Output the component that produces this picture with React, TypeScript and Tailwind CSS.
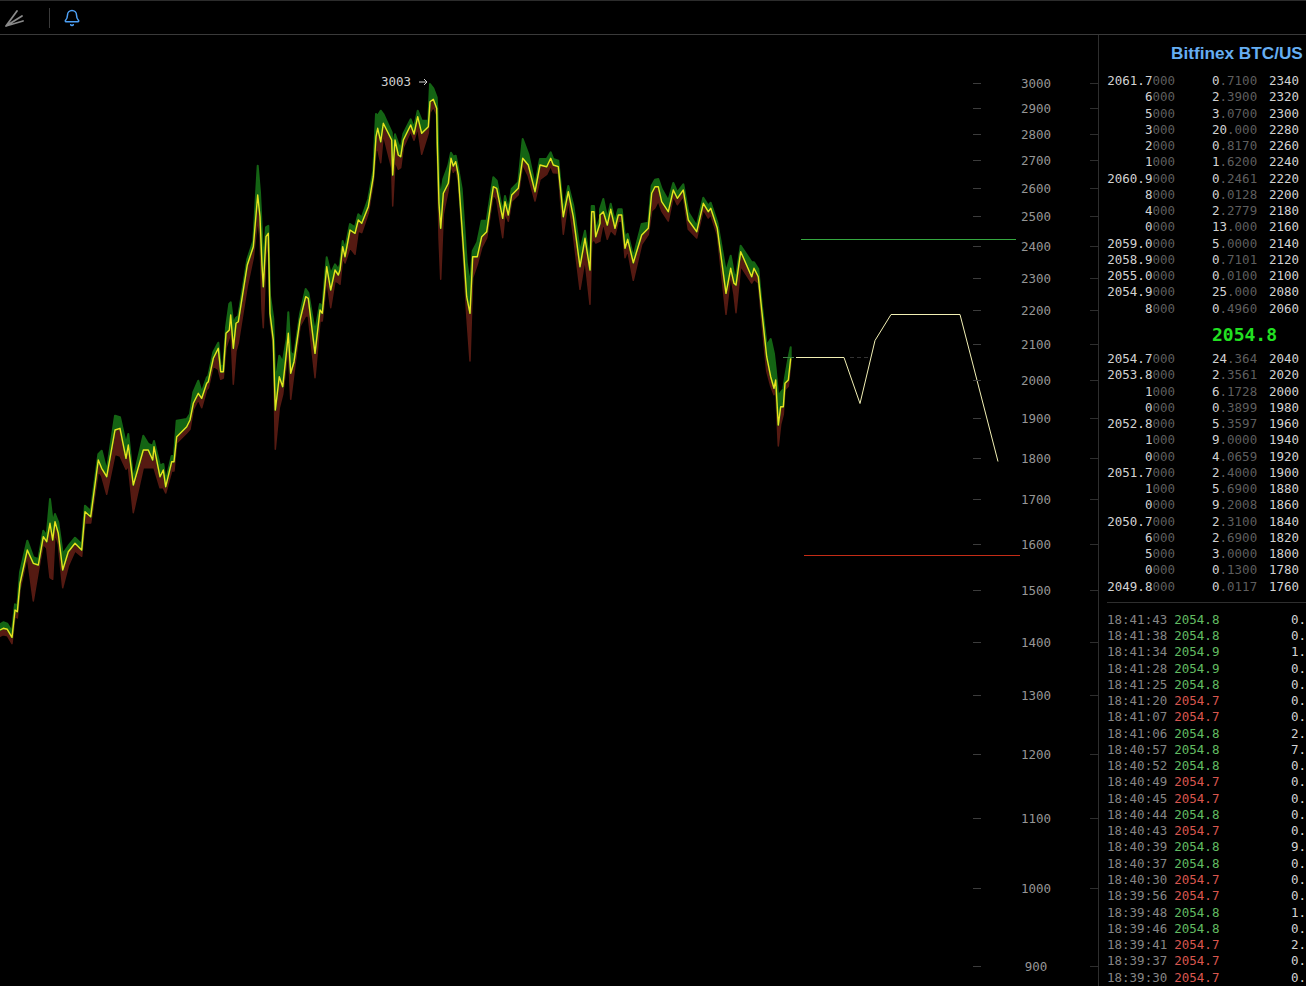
import { Bell } from "lucide-react";

const MONO = "font-['DejaVu_Sans_Mono','Liberation_Mono',monospace]";

// [x, y, up, down] traced from the chart, each segment in its own 3x crop coordinates
type Pt = [number, number, number?, number?];
type Segment = { ox: number; oy: number; points: Pt[] };

const SEGMENTS: Segment[] = [
  {
    ox: 0,
    oy: 400,
    points: [
      [0, 690, 8, 6], [10, 685, 15, 8], [22, 688, 8, 8], [36, 712, 4, 6], [45, 630, 8, 6], [52, 635, 5, 8],
      [60, 550, 30, 5], [82, 450, 25, 10], [100, 490, 15, 110], [115, 495, 8, 15], [130, 410, 15, 20],
      [140, 425, 15, 15], [150, 370, 70, 160], [158, 420, 50, 115], [165, 365, 20, 30], [175, 400, 30, 30],
      [188, 510, 45, 50], [205, 455, 10, 40], [225, 430, 10, 20], [245, 450, 5, 12], [255, 335, 15, 30],
      [272, 350, 8, 8], [295, 180, 5, 30], [305, 205, 50, 20], [320, 230, 10, 50], [345, 90, 40, 70],
      [360, 85, 30, 80], [378, 175, 40, 30], [385, 135, 30, 60], [400, 255, 10, 80], [430, 150, 40, 50],
      [445, 150, 15, 50], [458, 180, 40, 20], [462, 140, 5, 60], [480, 230, 30, 30], [490, 210, 15, 50],
      [497, 260, 10, 8], [515, 185, 8, 25], [522, 185, 8, 25], [530, 110, 45, 10], [560, 80, 20, 10],
    ],
  },
  {
    ox: 190,
    oy: 150,
    points: [
      [0, 810, 15, 25], [10, 760, 30, 8], [25, 730, 35, 15], [35, 745, 15, 25], [50, 700, 8, 10],
      [55, 695, 12, 12], [70, 625, 15, 20], [85, 595, 10, 60], [92, 665, 10, 20], [100, 665, 5, 15],
      [108, 550, 10, 40], [118, 540, 75, 20], [122, 495, 35, 25], [130, 595, 70, 105], [138, 520, 5, 80],
      [145, 515, 5, 60], [172, 345, 5, 60], [190, 290, 5, 30], [203, 135, 85, 70], [210, 200, 70, 60],
      [216, 345, 90, 130], [220, 410, 60, 120], [228, 260, 25, 50], [235, 250, 20, 30], [240, 490, 50, 5],
      [250, 570, 60, 10], [256, 780, 75, 115], [268, 680, 60, 90], [278, 710, 70, 20], [290, 600, 30, 30],
      [295, 550, 60, 40], [302, 670, 60, 75], [312, 635, 10, 30], [330, 510, 8, 10], [347, 440, 20, 55],
      [355, 445, 10, 50], [375, 610, 60, 70], [390, 480, 15, 30], [397, 490, 5, 20], [410, 350, 25, 35],
      [422, 420, 45, 50], [435, 360, 10, 30], [445, 375, 10, 20],
    ],
  },
  {
    ox: 340,
    oy: 60,
    points: [
      [0, 630, 10, 40], [8, 560, 12, 30], [15, 590, 20, 15], [30, 510, 15, 50], [45, 520, 15, 60],
      [55, 480, 10, 30], [65, 490, 10, 25], [85, 440, 20, 8], [100, 350, 5, 8], [108, 230, 65, 40],
      [113, 205, 35, 60], [122, 245, 90, 60], [130, 190, 25, 30], [155, 240, 20, 80], [158, 345, 80, 90],
      [165, 240, 5, 60], [175, 285, 30, 40], [182, 290, 20, 30], [190, 240, 15, 20], [212, 195, 10, 10],
      [222, 222, 15, 5], [233, 170, 15, 30], [245, 220, 35, 60], [265, 200, 15, 10], [270, 125, 50, 30],
      [280, 118, 30, 20], [290, 145, 30, 5], [292, 250, 100, 5], [297, 430, 60, 100], [302, 505, 90, 150],
      [310, 400, 40, 60], [325, 370, 50, 8], [333, 295, 10, 8], [340, 318, 25, 8], [347, 305, 15, 8],
      [355, 345, 10, 8], [365, 490, 100, 5], [380, 710, 100, 50], [390, 760, 80, 140], [398, 590, 10, 60],
      [412, 590, 40, 20], [425, 530, 45, 30], [440, 515, 30, 10], [460, 380, 25, 20], [470, 385, 20, 30],
      [488, 475, 10, 55], [495, 425, 10, 30], [505, 465, 10, 15], [515, 405, 15, 15], [535, 385, 15, 8],
      [548, 295, 55, 8], [565, 315, 30, 30], [585, 395, 15, 25], [600, 315, 15, 40], [620, 320, 20, 20],
      [632, 295, 15, 20], [640, 315, 15, 20], [655, 320, 15, 5], [670, 470, 8, 50], [685, 395, 8, 20],
      [700, 470, 30, 50], [720, 620, 40, 65], [735, 535, 20, 60], [750, 630, 5, 100], [755, 455, 5, 90],
      [762, 455, 5, 80], [767, 530, 15, 10], [780, 490, 8, 50],
    ],
  },
  {
    ox: 600,
    oy: 170,
    points: [
      [0, 135, 10, 70], [10, 125, 35, 30], [22, 165, 15, 40], [32, 118, 10, 60], [45, 175, 15, 15],
      [55, 135, 5, 10], [65, 135, 5, 10], [75, 235, 30, 25], [83, 208, 10, 30], [100, 278, 8, 50],
      [125, 195, 30, 25], [145, 175, 5, 15], [155, 70, 20, 50], [165, 50, 18, 60], [175, 50, 20, 40],
      [185, 95, 35, 25], [205, 125, 30, 25], [220, 60, 18, 15], [232, 85, 15, 8], [250, 60, 12, 8],
      [265, 150, 20, 25], [290, 185, 8, 8], [310, 100, 8, 15], [325, 125, 15, 8], [332, 115, 10, 10],
      [352, 175, 15, 5], [378, 370, 60, 60], [392, 295, 35, 10], [402, 340, 25, 30], [408, 345, 20, 80],
      [422, 245, 15, 40], [455, 320, 40, 8], [462, 295, 15, 30], [475, 320, 20, 5], [485, 420, 15, 30],
      [500, 560, 30, 40], [512, 620, 110, 25], [522, 655, 100, 5], [527, 630, 30, 30], [535, 765, 80, 60],
      [542, 710, 40, 50], [550, 710, 50, 20], [555, 640, 10, 15], [565, 630, 60, 10], [572, 565, 30, 5],
    ],
  },
];

const TRACE = SEGMENTS.flatMap((seg) =>
  seg.points.map(([x, y, u = 12, d = 12]) => ({
    x: seg.ox + x / 3,
    y: seg.oy + y / 3,
    // the bands are never thinner than a few pixels round the line
    up: Math.max(u, 14) / 3 + 1,
    down: Math.max(d, 16) / 3 + 1,
  })),
);

const toPoints = (list: { x: number; y: number }[]) =>
  list.map((p) => `${p.x.toFixed(1)},${p.y.toFixed(1)}`).join(" ");

const PRICE_LINE = toPoints(TRACE);
const HIGH_BAND = toPoints([
  ...TRACE.map((p) => ({ x: p.x, y: p.y - p.up })),
  ...[...TRACE].reverse(),
]);
const LOW_BAND = toPoints([
  ...TRACE.map((p) => ({ x: p.x, y: p.y + p.down })),
  ...[...TRACE].reverse(),
]);

const AXIS: [string, number][] = [
  ["3000", 83], ["2900", 108], ["2800", 134], ["2700", 160], ["2600", 188], ["2500", 216],
  ["2400", 246], ["2300", 278], ["2200", 310], ["2100", 344], ["2000", 380], ["1900", 418],
  ["1800", 458], ["1700", 499], ["1600", 544], ["1500", 590], ["1400", 642], ["1300", 695],
  ["1200", 754], ["1100", 818], ["1000", 888], ["900", 966],
];

const ASKS: [string, string, string][] = [
  ["2061.7", "0.7100", "2340"], ["6", "2.3900", "2320"], ["5", "3.0700", "2300"],
  ["3", "20.000", "2280"], ["2", "0.8170", "2260"], ["1", "1.6200", "2240"],
  ["2060.9", "0.2461", "2220"], ["8", "0.0128", "2200"], ["4", "2.2779", "2180"],
  ["0", "13.000", "2160"], ["2059.0", "5.0000", "2140"], ["2058.9", "0.7101", "2120"],
  ["2055.0", "0.0100", "2100"], ["2054.9", "25.000", "2080"], ["8", "0.4960", "2060"],
];

const BIDS: [string, string, string][] = [
  ["2054.7", "24.364", "2040"], ["2053.8", "2.3561", "2020"], ["1", "6.1728", "2000"],
  ["0", "0.3899", "1980"], ["2052.8", "5.3597", "1960"], ["1", "9.0000", "1940"],
  ["0", "4.0659", "1920"], ["2051.7", "2.4000", "1900"], ["1", "5.6900", "1880"],
  ["0", "9.2008", "1860"], ["2050.7", "2.3100", "1840"], ["6", "2.6900", "1820"],
  ["5", "3.0000", "1800"], ["0", "0.1300", "1780"], ["2049.8", "0.0117", "1760"],
];

const TRADES: [string, string, boolean, string][] = [
  ["18:41:43", "2054.8", true, "0."], ["18:41:38", "2054.8", true, "0."], ["18:41:34", "2054.9", true, "1."],
  ["18:41:28", "2054.9", true, "0."], ["18:41:25", "2054.8", true, "0."], ["18:41:20", "2054.7", false, "0."],
  ["18:41:07", "2054.7", false, "0."], ["18:41:06", "2054.8", true, "2."], ["18:40:57", "2054.8", true, "7."],
  ["18:40:52", "2054.8", true, "0."], ["18:40:49", "2054.7", false, "0."], ["18:40:45", "2054.7", false, "0."],
  ["18:40:44", "2054.8", true, "0."], ["18:40:43", "2054.7", false, "0."], ["18:40:39", "2054.8", true, "9."],
  ["18:40:37", "2054.8", true, "0."], ["18:40:30", "2054.7", false, "0."], ["18:39:56", "2054.7", false, "0."],
  ["18:39:48", "2054.8", true, "1."], ["18:39:46", "2054.8", true, "0."], ["18:39:41", "2054.7", false, "2."],
  ["18:39:37", "2054.7", false, "0."], ["18:39:30", "2054.7", false, "0."],
];

function BookRow({ row }: { row: [string, string, string] }) {
  const [price, size, total] = row;
  const dot = size.indexOf(".");
  return (
    <div className="flex h-[16.27px] items-center whitespace-nowrap">
      <span className="w-[68px] text-right text-[#d2d2d2]">
        {price}
        <span className="text-[#5e5e5e]">000</span>
      </span>
      <span className="ml-[37px] w-[45px] text-[#d2d2d2]">
        {size.slice(0, dot)}
        <span className="text-[#5e5e5e]">{size.slice(dot)}</span>
      </span>
      <span className="ml-3 text-[#d2d2d2]">{total}</span>
    </div>
  );
}

function PriceChart() {
  return (
    <svg width="1098" height="951" viewBox="0 35 1098 951" className="block">
      <g className="blur-[0.5px]">
        <polygon points={LOW_BAND} fill="#551a12" stroke="#551a12" strokeWidth="1.5" strokeLinejoin="round" />
        <polygon points={HIGH_BAND} fill="#146414" stroke="#146414" strokeWidth="2" strokeLinejoin="round" />
        <polyline points={PRICE_LINE} fill="none" stroke="#e8e21e" strokeWidth="1.4" strokeLinejoin="round" />
      </g>

      <line x1="801" y1="239.5" x2="1016" y2="239.5" stroke="#35a840" />
      <line x1="804" y1="555.5" x2="1020" y2="555.5" stroke="#c42c16" />
      <line x1="783" y1="357.5" x2="794" y2="357.5" stroke="#3f7f45" />
      <line x1="850" y1="357.5" x2="868" y2="357.5" stroke="#333" strokeDasharray="4 3" />
      <polyline
        points="796,357.5 844,357.5 860,403.5 875,340.5 891,314.5 960,314.5 998,461.5"
        fill="none"
        stroke="#f2f0b4"
        strokeWidth="1"
      />

      {AXIS.map(([label, y]) => (
        <g key={label}>
          <line x1="973" y1={y + 0.5} x2="981" y2={y + 0.5} stroke="#3c3c3c" />
          <line x1="1090" y1={y + 0.5} x2="1098" y2={y + 0.5} stroke="#2e2e2e" />
          <text
            x="1036"
            y={y + 5}
            textAnchor="middle"
            fill="#969696"
            fontSize="12.5"
            fontFamily="'DejaVu Sans Mono', monospace"
          >
            {label}
          </text>
        </g>
      ))}

      <text x="381" y="86" fill="#d0d0d0" fontSize="12.5" fontFamily="'DejaVu Sans Mono', monospace">
        3003
      </text>
      <path d="M419 82h8M424 79l3 3-3 3" fill="none" stroke="#d0d0d0" strokeWidth="1" />
    </svg>
  );
}

export default function App() {
  return (
    <div className="flex h-[986px] w-[1306px] flex-col overflow-hidden bg-black">
      <header className="flex h-[35px] shrink-0 items-center border-t border-b border-t-[#2c2c2c] border-b-[#3a3a3a]">
        <svg width="26" height="24" viewBox="0 0 26 24" className="ml-[3px] shrink-0">
          <path
            d="M3 20 14 5M3 20 19 10M3 20 20 15"
            fill="none"
            stroke="#8a8a8a"
            strokeWidth="1.8"
            strokeLinecap="round"
          />
        </svg>
        <div className="ml-5 h-[20px] w-px bg-[#3a3a3a]" />
        <Bell className="ml-[13px] text-[#4da0f5]" size={18} strokeWidth={2} />
      </header>

      <div className="flex min-h-0 flex-1">
        <main className="w-[1098px] shrink-0">
          <PriceChart />
        </main>

        <aside className={`min-w-0 flex-1 overflow-hidden border-l border-l-[#2e2e2e] text-[12.5px] ${MONO}`}>
          <div className="flex h-[38.25px] items-center overflow-hidden whitespace-nowrap pl-[72px] font-['Liberation_Sans',Arial,sans-serif] text-[17.2px] font-bold text-[#66aef2]">
            Bitfinex BTC/US
          </div>

          <div className="pl-2">
            {ASKS.map((row, i) => (
              <BookRow key={i} row={row} />
            ))}
            <div className="flex h-[34px] items-center pl-[105px] text-[18px] font-bold text-[#22e022]">2054.8</div>
            {BIDS.map((row, i) => (
              <BookRow key={i} row={row} />
            ))}
            <div className="mt-[6.75px] mb-[9px] h-px bg-[#2e2e2e]" />
            {TRADES.map(([time, price, up, qty], i) => (
              <div key={i} className="flex h-[16.27px] items-center whitespace-nowrap">
                <span className="w-[68px] text-[#858585]">{time}</span>
                <span className={`w-[118px] ${up ? "text-[#62bb62]" : "text-[#d8564e]"}`}>{price}</span>
                <span className="text-[#d2d2d2]">{qty}</span>
              </div>
            ))}
          </div>
        </aside>
      </div>
    </div>
  );
}
